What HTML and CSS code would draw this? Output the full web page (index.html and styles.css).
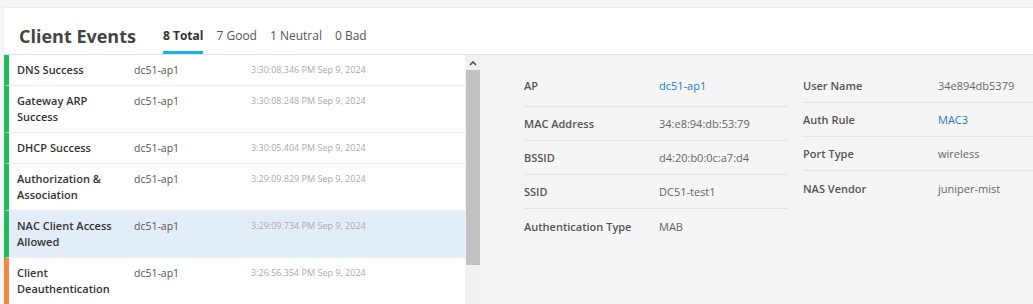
FILE: index.html
```html
<!DOCTYPE html>
<html lang="en">
<head>
    <meta charset="UTF-8">
    <meta name="viewport" content="width=device-width, initial-scale=1.0">
    <title>Client Events</title>
    <link rel="stylesheet" href="styles.css">
</head>
<body>
    <div class="card">
        <div class="header">
            <h1>Client Events</h1>
            <div class="tabs">
                <span class="tab active">8 Total</span>
                <span class="tab">7 Good</span>
                <span class="tab">1 Neutral</span>
                <span class="tab">0 Bad</span>
            </div>
        </div>

        <div class="body">
            <div class="list">
                <div class="rows">
                    <div class="row good">
                        <div class="name">DNS Success</div>
                        <div class="ap">dc51-ap1</div>
                        <div class="time">3:30:08.346 PM Sep 9, 2024</div>
                    </div>
                    <div class="row good">
                        <div class="name">Gateway ARP Success</div>
                        <div class="ap">dc51-ap1</div>
                        <div class="time">3:30:08.248 PM Sep 9, 2024</div>
                    </div>
                    <div class="row good">
                        <div class="name">DHCP Success</div>
                        <div class="ap">dc51-ap1</div>
                        <div class="time">3:30:05.404 PM Sep 9, 2024</div>
                    </div>
                    <div class="row good">
                        <div class="name">Authorization &amp; Association</div>
                        <div class="ap">dc51-ap1</div>
                        <div class="time">3:29:09.829 PM Sep 9, 2024</div>
                    </div>
                    <div class="row good selected">
                        <div class="name">NAC Client Access Allowed</div>
                        <div class="ap">dc51-ap1</div>
                        <div class="time">3:29:09.734 PM Sep 9, 2024</div>
                    </div>
                    <div class="row neutral">
                        <div class="name">Client Deauthentication</div>
                        <div class="ap">dc51-ap1</div>
                        <div class="time">3:26:56.354 PM Sep 9, 2024</div>
                    </div>
                </div>
                <div class="scrollbar">
                    <div class="scroll-up">
                        <svg width="8" height="6" viewBox="0 0 8 6"><path d="M1 5 L4 2 L7 5" fill="none" stroke="#505050" stroke-width="1.6"/></svg>
                    </div>
                    <div class="thumb"></div>
                </div>
            </div>

            <div class="details">
                <div class="col col-left">
                    <div class="item first">
                        <span class="label">AP</span>
                        <span class="value link">dc51-ap1</span>
                    </div>
                    <div class="item">
                        <span class="label">MAC Address</span>
                        <span class="value">34:e8:94:db:53:79</span>
                    </div>
                    <div class="item">
                        <span class="label">BSSID</span>
                        <span class="value">d4:20:b0:0c:a7:d4</span>
                    </div>
                    <div class="item">
                        <span class="label">SSID</span>
                        <span class="value">DC51-test1</span>
                    </div>
                    <div class="item last">
                        <span class="label">Authentication Type</span>
                        <span class="value">MAB</span>
                    </div>
                </div>
                <div class="col col-right">
                    <div class="item">
                        <span class="label">User Name</span>
                        <span class="value">34e894db5379</span>
                    </div>
                    <div class="item">
                        <span class="label">Auth Rule</span>
                        <span class="value link">MAC3</span>
                    </div>
                    <div class="item">
                        <span class="label">Port Type</span>
                        <span class="value">wireless</span>
                    </div>
                    <div class="item last">
                        <span class="label">NAS Vendor</span>
                        <span class="value">juniper-mist</span>
                    </div>
                </div>
            </div>
        </div>
    </div>
</body>
</html>
```

FILE: styles.css
```css
html, body {
    height: 100%;
}
body {
    margin: 0;
    padding: 7px 0 0 3px;
    box-sizing: border-box;
    background: #f6f6f6;
    font-family: "Open Sans", Arial, sans-serif;
    color: #333;
    overflow: hidden;
}
.card {
    background: #fff;
    border-left: 1px solid #ececec;
    border-top: 1px solid #ececec;
    height: 100%;
    display: flex;
    flex-direction: column;
}
.header {
    display: flex;
    align-items: flex-end;
    height: 47px;
    border-bottom: 1px solid #e4e4e4;
    box-sizing: border-box;
}
.header h1 {
    margin: 0 0 5px 15px;
    font-size: 18px;
    font-weight: 700;
    color: #444;
    line-height: 26px;
}
.tabs {
    display: flex;
    margin-left: 27px;
    gap: 13px;
}
.tab {
    font-size: 12px;
    color: #555;
    padding-bottom: 7px;
    line-height: 16px;
    border-bottom: 3px solid transparent;
}
.tab.active {
    font-weight: 700;
    color: #333;
    border-bottom-color: #1bb0e9;
}
.body {
    flex: 1;
    display: flex;
    min-height: 0;
}
.list {
    display: flex;
    width: 477px;
    flex-shrink: 0;
}
.rows {
    flex: 1;
}
.row {
    display: flex;
    border-left: 5px solid #1dbb5c;
    border-bottom: 1px solid #eeeeee;
    padding: 7px 0;
    line-height: 16px;
}
.row.neutral {
    border-left-color: #f08a3c;
}
.row.selected {
    background: #e3edf7;
}
.name {
    width: 125px;
    padding: 0 12px 0 8px;
    box-sizing: border-box;
    font-size: 11px;
    font-weight: 600;
    color: #333;
}
.ap {
    width: 117px;
    font-size: 10.5px;
    color: #555;
}
.time {
    font-size: 9px;
    color: #aaa;
}
.scrollbar {
    width: 16px;
    background: #f1f1f1;
    display: flex;
    flex-direction: column;
}
.scroll-up {
    height: 15px;
    display: flex;
    align-items: center;
    justify-content: center;
}
.thumb {
    height: 195px;
    margin: 0 1px;
    background: #c1c1c1;
}
.details {
    flex: 1;
    background: #f5f5f5;
    display: flex;
    padding: 14px 0 0 43px;
    align-items: flex-start;
}
.col-left {
    width: 264px;
    margin-right: 15px;
}
.col-right {
    flex: 1;
}
.item {
    display: flex;
    height: 34px;
    align-items: center;
    border-bottom: 1px solid #e4e4e4;
    box-sizing: border-box;
    font-size: 11px;
}
.item.first {
    height: 38px;
    padding-bottom: 4px;
}
.item.last {
    border-bottom: none;
}
.label {
    width: 135px;
    font-weight: 600;
    color: #555;
}
.value {
    color: #666;
}
.value.link {
    color: #1a7dc6;
}
```
